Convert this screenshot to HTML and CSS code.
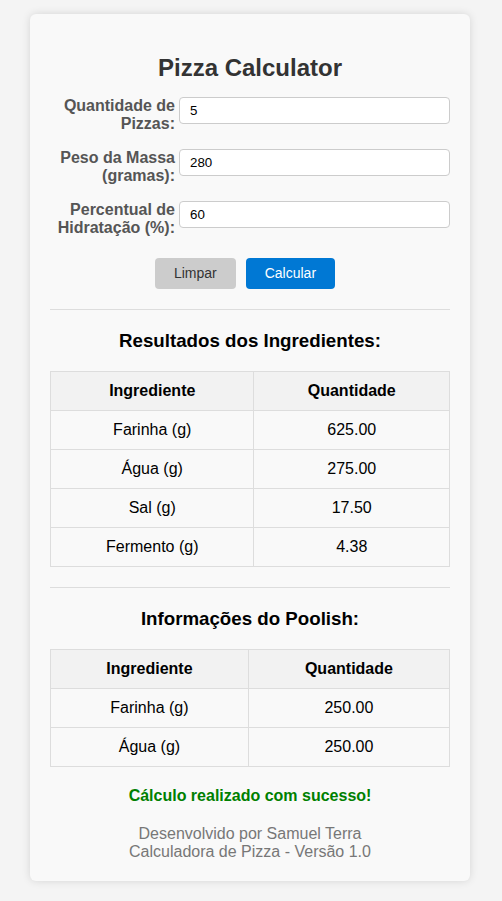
FILE: index.html
```html
<!DOCTYPE html>
<html lang="pt">
<head>
<meta charset="utf-8">
<title>Pizza Calculator</title>
<link rel="stylesheet" href="styles.css">
</head>
<body>
<div class="card">
  <h1 class="title">Pizza Calculator</h1>
  <form class="form">
    <div class="row">
      <label class="label" for="q">Quantidade de Pizzas:</label>
      <input class="input" id="q" type="text" value="5">
    </div>
    <div class="row">
      <label class="label" for="p">Peso da Massa (gramas):</label>
      <input class="input" id="p" type="text" value="280">
    </div>
    <div class="row">
      <label class="label" for="h">Percentual de Hidratação (%):</label>
      <input class="input" id="h" type="text" value="60">
    </div>
    <div class="actions">
      <button type="button" class="btn btn-clear">Limpar</button>
      <button type="button" class="btn btn-calc">Calcular</button>
    </div>
  </form>
  <hr class="divider">
  <h2 class="section-title">Resultados dos Ingredientes:</h2>
  <table class="table">
    <thead>
      <tr><th>Ingrediente</th><th>Quantidade</th></tr>
    </thead>
    <tbody>
      <tr><td>Farinha (g)</td><td>625.00</td></tr>
      <tr><td>Água (g)</td><td>275.00</td></tr>
      <tr><td>Sal (g)</td><td>17.50</td></tr>
      <tr><td>Fermento (g)</td><td>4.38</td></tr>
    </tbody>
  </table>
  <hr class="divider">
  <h2 class="section-title">Informações do Poolish:</h2>
  <table class="table">
    <thead>
      <tr><th>Ingrediente</th><th>Quantidade</th></tr>
    </thead>
    <tbody>
      <tr><td>Farinha (g)</td><td>250.00</td></tr>
      <tr><td>Água (g)</td><td>250.00</td></tr>
    </tbody>
  </table>
  <p class="success">Cálculo realizado com sucesso!</p>
  <footer class="footer">
    <div>Desenvolvido por Samuel Terra</div>
    <div>Calculadora de Pizza - Versão 1.0</div>
  </footer>
</div>
</body>
</html>
```
FILE: styles.css
```css
html, body {
  margin: 0;
  padding: 0;
}
body {
  background: #f4f4f4;
  font-family: "Liberation Sans", Arial, sans-serif;
  font-size: 16px;
  color: #000;
  padding: 14px 0 21px;
}
.card {
  box-sizing: border-box;
  width: 440px;
  margin-left: 30px;
  padding: 20px;
  background: #f9f9f9;
  border-radius: 6px;
  box-shadow: 0 0 8px rgba(0, 0, 0, 0.13);
}
.title {
  margin: 20px 0 15px;
  font-size: 24px;
  line-height: 28px;
  font-weight: bold;
  color: #333;
  text-align: center;
}
.form {
  margin: 0;
}
.row {
  display: flex;
  align-items: flex-start;
  margin-bottom: 16px;
}
.label {
  box-sizing: border-box;
  width: 125px;
  flex: 0 0 125px;
  margin-right: 4px;
  text-align: right;
  font-weight: bold;
  font-size: 16px;
  line-height: 18px;
  color: #555;
}
.input {
  box-sizing: border-box;
  flex: 1 1 auto;
  height: 27px;
  padding: 4px 10px;
  border: 1px solid #ccc;
  border-radius: 4px;
  background: #fff;
  font-family: "Liberation Sans", Arial, sans-serif;
  font-size: 13.33px;
  color: #000;
}
.actions {
  display: flex;
  justify-content: center;
  margin-top: 5px;
  padding-top: 5px;
}
.btn {
  box-sizing: border-box;
  height: 31px;
  margin-right: 10px;
  padding: 0 19px;
  border: none;
  border-radius: 4px;
  font-family: "Liberation Sans", Arial, sans-serif;
  font-size: 14px;
  line-height: 31px;
}
.btn-clear {
  background: #ccc;
  color: #333;
}
.btn-calc {
  background: #0078d4;
  color: #fff;
}
.divider {
  margin: 20px 0 0;
  border: 0;
  border-top: 1px solid #ddd;
  height: 0;
}
.section-title {
  margin: 20px 0 20px;
  font-size: 18.72px;
  line-height: 21px;
  font-weight: bold;
  text-align: center;
  color: #000;
}
.table {
  width: 100%;
  border-collapse: collapse;
  margin-bottom: 20px;
}
.table th,
.table td {
  border: 1px solid #ddd;
  padding: 10px;
  line-height: 18px;
  font-size: 16px;
  text-align: center;
}
.table th {
  background: #f2f2f2;
  font-weight: bold;
}
.success {
  margin: 0 0 20px;
  text-align: center;
  font-weight: bold;
  line-height: 18px;
  color: #008000;
}
.footer {
  text-align: center;
  color: #777;
  line-height: 18px;
}
```
